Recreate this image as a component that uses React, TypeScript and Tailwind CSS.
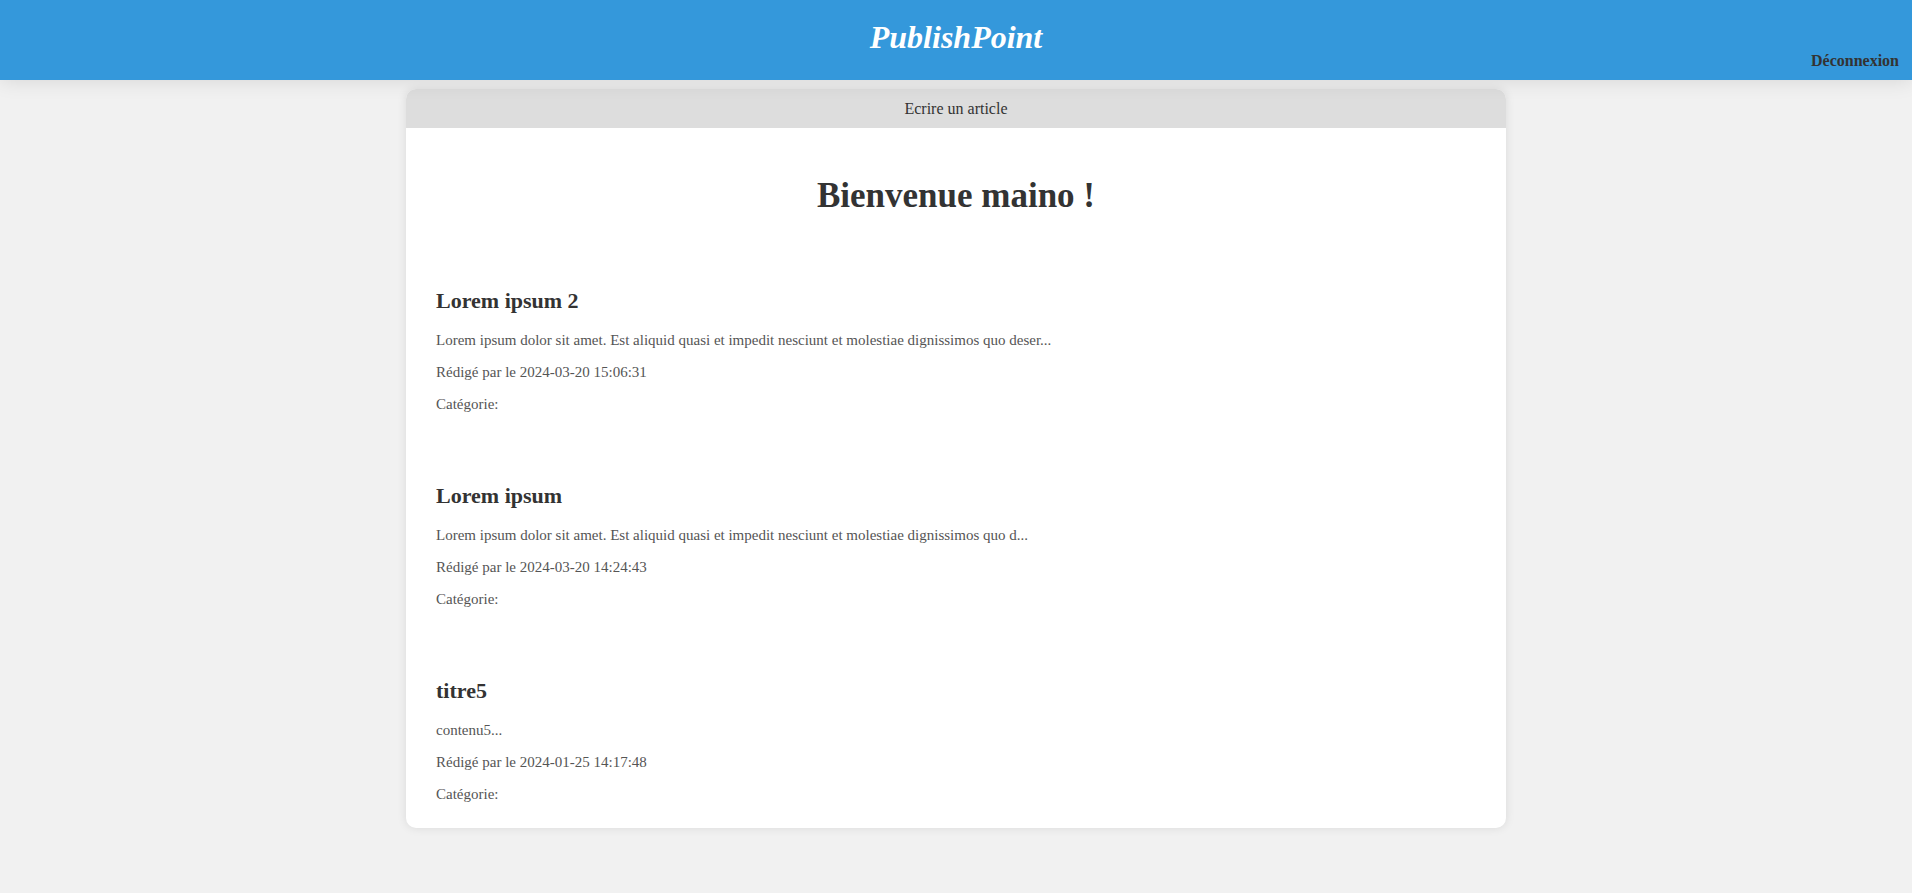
import React from 'react';

type Article = {
  title: string;
  excerpt: string;
  date: string;
};

const articles: Article[] = [
  {
    title: 'Lorem ipsum 2',
    excerpt:
      'Lorem ipsum dolor sit amet. Est aliquid quasi et impedit nesciunt et molestiae dignissimos quo deser...',
    date: '2024-03-20 15:06:31',
  },
  {
    title: 'Lorem ipsum',
    excerpt:
      'Lorem ipsum dolor sit amet. Est aliquid quasi et impedit nesciunt et molestiae dignissimos quo d...',
    date: '2024-03-20 14:24:43',
  },
  {
    title: 'titre5',
    excerpt: 'contenu5...',
    date: '2024-01-25 14:17:48',
  },
];

const ArticleItem: React.FC<{ article: Article }> = ({ article }) => {
  return (
    <article className="flex flex-col">
      <h2 className="text-[22px] font-bold leading-[26px] text-[#333]">{article.title}</h2>
      <div className="mt-[18px] flex flex-col gap-[15px] text-[15px] leading-[17px] text-[#555]">
        <p>{article.excerpt}</p>
        <p>Rédigé par le {article.date}</p>
        <p>Catégorie:</p>
      </div>
    </article>
  );
};

const App: React.FC = () => {
  return (
    <div className="min-h-screen bg-[#f1f1f1] font-['Liberation_Serif',serif]">
      {/* Header */}
      <header className="relative z-10 grid h-[80px] grid-cols-[1fr_auto_1fr] bg-[#3498db] shadow-[0_0_20px_rgba(0,0,0,0.12)]">
        <div />
        <h1 className="pt-[19px] text-[32px] font-bold italic leading-[37px] text-white">PublishPoint</h1>
        <nav className="flex items-end justify-end pb-[10px] pr-[13px]">
          <a href="#" className="text-[16px] font-bold leading-[18px] text-[#333]">
            Déconnexion
          </a>
        </nav>
      </header>

      {/* Main card */}
      <main className="mx-auto mt-[9px] w-[1100px] overflow-hidden rounded-[10px] bg-white shadow-[0_0_10px_rgba(0,0,0,0.1)]">
        <div className="bg-[#ddd] py-[10px] text-center text-[16px] leading-[19px] text-[#333]">
          <a href="#">Ecrire un article</a>
        </div>

        <div className="px-[30px] pb-[25px] pt-[48px]">
          <h1 className="text-center text-[35px] font-bold leading-[40px] text-[#333]">Bienvenue maino !</h1>

          <div className="mt-[72px] flex flex-col gap-[70px]">
            {articles.map((a) => (
              <ArticleItem key={a.title} article={a} />
            ))}
          </div>
        </div>
      </main>
    </div>
  );
};

export default App;
